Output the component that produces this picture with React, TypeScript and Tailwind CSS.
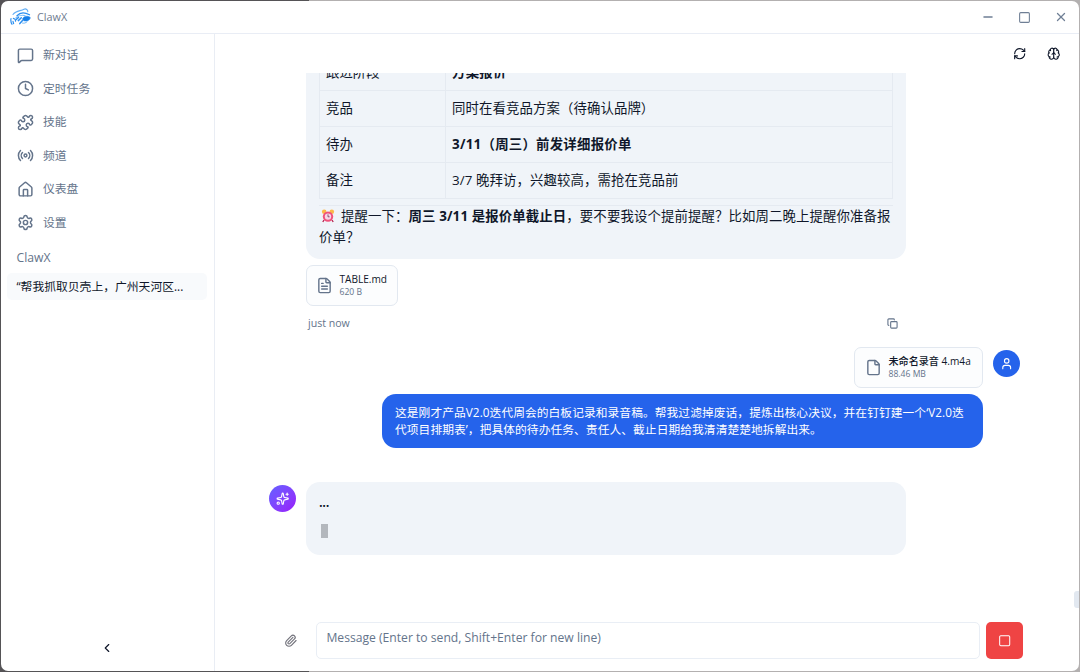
import {
  Brain,
  ChevronLeft,
  Clock,
  Copy,
  File,
  FileText,
  House,
  MessageSquare,
  Minus,
  Paperclip,
  Puzzle,
  Radio,
  RefreshCw,
  Settings,
  Sparkles,
  Square,
  User,
  X,
  type LucideIcon,
} from "lucide-react";

const navItems: { icon: LucideIcon; label: string }[] = [
  { icon: MessageSquare, label: "新对话" },
  { icon: Clock, label: "定时任务" },
  { icon: Puzzle, label: "技能" },
  { icon: Radio, label: "频道" },
  { icon: House, label: "仪表盘" },
  { icon: Settings, label: "设置" },
];

const rows = [
  { name: "跟进阶段", value: "方案报价", bold: true },
  { name: "竞品", value: "同时在看竞品方案（待确认品牌）" },
  { name: "待办", value: "3/11（周三）前发详细报价单", bold: true },
  { name: "备注", value: "3/7 晚拜访，兴趣较高，需抢在竞品前" },
];

function Logo() {
  return (
    <svg viewBox="0 0 22 20" className="h-5 w-[22px]" fill="none" stroke="#2b8ff0" strokeLinecap="round">
      <path d="M3 7.5C6 3.2 11 4.2 14 2.2c2-1 4 .8 3.8 2.6" strokeWidth="1.1" stroke="#62aef5" />
      <path d="M7 8.7c3-3.4 7-4 12.5-.9" strokeWidth="1.3" />
      <path d="M6 10.8c3-2.6 6-3 9-2.2" strokeWidth="1.2" stroke="#7fbef8" />
      <path d="M12.5 12c1-3 5.5-3.8 7.9-1.3-1 2.8-3.6 4-6.7 3z" fill="#147de8" strokeWidth=".6" />
      <path d="M11.3 10.8 8.3 13.6M12.5 13.6l-2.7 3M8.5 10.5l-2.3 2" strokeWidth="1.5" />
      <path d="M1 11.5c-.4 2 .1 4.3 1 5.8M3.3 11.3c1.7.3 2.4 1.3 2.2 2.8M3 14.3l.6 2.4" strokeWidth="1.2" />
      <path d="M17 14.8c-1.5 1.4-3 1.6-4.5 1.3" strokeWidth=".9" stroke="#62aef5" />
    </svg>
  );
}

function AlarmClock() {
  return (
    <svg viewBox="0 0 14 14" className="mr-[6px] inline-block size-[14px] align-[-2px]">
      <path d="m3 11-1.2 2M11 11l1.2 2" stroke="#b4234e" strokeWidth="1.3" />
      <circle cx="3.2" cy="2.8" r="2.3" fill="#fcb84a" />
      <circle cx="10.8" cy="2.8" r="2.3" fill="#fcb84a" />
      <circle cx="7" cy="7.6" r="5.2" fill="#f0527b" />
      <circle cx="7" cy="7.6" r="3.2" fill="#f5d6e6" />
      <path d="M7 5.4v2.4h1.6" stroke="#83436b" strokeWidth=".9" fill="none" />
    </svg>
  );
}

function TitleBar() {
  return (
    <header className="flex h-[33px] shrink-0 items-center border-b border-[#e9edf5] pr-[11px] pl-[9px]">
      <Logo />
      <span className="ml-[5px] text-[10.8px] font-medium text-[#6d7b8f]">ClawX</span>
      <div className="ml-auto flex items-center gap-[23px] text-[#6f7f95]">
        <Minus size={14} strokeWidth={2.2} />
        <Square size={13} strokeWidth={2} />
        <X size={14} strokeWidth={2.2} />
      </div>
    </header>
  );
}

function Sidebar() {
  return (
    <aside className="flex w-[214px] shrink-0 flex-col border-r border-[#e9edf4] pr-[7px] pl-1.5 pt-[4.5px]">
      <nav>
        {navItems.map(({ icon: Icon, label }) => (
          <div key={label} className="flex h-[33.5px] items-center gap-[9.5px] pl-[9.5px] text-[#64748b]">
            <Icon size={17} strokeWidth={2.1} />
            <span className="text-[11.8px]">{label}</span>
          </div>
        ))}
      </nav>
      <div className="mt-[6.5px] pl-[9.5px] text-[12.2px] leading-[24px] text-[#64748b]">ClawX</div>
      <div className="mt-[3px] flex h-[27px] items-center rounded-[5px] bg-[#f8fafc] pl-[9.5px] text-[11.8px] whitespace-nowrap text-[#0f172a]">
        “帮我抓取贝壳上，广州天河区...
      </div>
      <div className="mt-auto flex justify-center pb-4 text-[#0f172a]">
        <ChevronLeft size={14} strokeWidth={2} />
      </div>
    </aside>
  );
}

function Attachment({ icon: Icon, name, size, className }: { icon: LucideIcon; name: string; size: string; className: string }) {
  return (
    <div className={`flex h-[41px] items-center gap-[6.5px] rounded-[7px] border border-[#e2e8f0] bg-[#fcfdfe] whitespace-nowrap ${className}`}>
      <Icon size={17} strokeWidth={2} className="shrink-0 text-[#64748b]" />
      <div>
        <p className="text-[10.1px] leading-[13.4px] font-medium text-[#0f172a]">{name}</p>
        <p className="text-[8.6px] leading-[12.5px] text-[#64748b]">{size}</p>
      </div>
    </div>
  );
}

function ReportMessage() {
  return (
    <div className="ml-[91px] w-[600px]">
      <div className="flex h-[186px] flex-col justify-end overflow-hidden rounded-b-[14px] bg-[#f0f4f9] px-[13px] pb-2.5 text-[13.4px] text-[#0f172a]">
        <table className="w-[574px] shrink-0 table-fixed border-collapse">
          <tbody>
            {rows.map((row) => (
              <tr key={row.name} className="h-[35.8px]">
                <td className="w-[126px] border border-[#e5eaf1] px-1.5 pt-0 pb-[1.5px]">{row.name}</td>
                <td className={`border border-[#e5eaf1] px-1.5 pt-0 pb-[1.5px] ${row.bold ? "font-bold tracking-[0.25px]" : "tracking-[0.1px]"}`}>
                  {row.value}
                </td>
              </tr>
            ))}
          </tbody>
        </table>
        <hr className="mt-[6px] shrink-0 border-[#e5eaf1]" />
        <p className="shrink-0 pl-0.5 leading-[21.6px] tracking-[0.12px] whitespace-nowrap">
          <AlarmClock />
          提醒一下：<strong>周三 3/11 是报价单截止日</strong>，要不要我设个提前提醒？比如周二晚上提醒你准备报
          <br />
          <span className="-ml-0.5">价单？</span>
        </p>
      </div>
      <Attachment icon={FileText} name="TABLE.md" size="620 B" className="mt-[6px] w-[92px] pl-[9px]" />
      <div className="mt-2.5 flex h-4 items-center justify-between pr-2 pl-0.5 text-[#64748b]">
        <span className="text-[10.6px]">just now</span>
        <Copy size={11} strokeWidth={2.4} className="-mt-px" />
      </div>
    </div>
  );
}

function UserMessage() {
  return (
    <div className="mt-[15px] mr-[59px] flex items-start justify-end gap-2.5">
      <div className="flex flex-col items-end gap-[6px]">
        <Attachment icon={File} name="未命名录音 4.m4a" size="88.46 MB" className="w-[129px] pl-2.5" />
        <div className="h-[54px] w-[601px] rounded-[14px] bg-[#2563eb] pt-[10px] pl-[13px] text-[11.72px] leading-[17px] tracking-[0.08px] whitespace-nowrap text-white">
          这是刚才产品V2.0迭代周会的白板记录和录音稿。帮我过滤掉废话，提炼出核心决议，并在钉钉建一个‘V2.0迭
          <br />
          代项目排期表’，把具体的待办任务、责任人、截止日期给我清清楚楚地拆解出来。
        </div>
      </div>
      <div className="mt-[3px] flex size-[27px] items-center justify-center rounded-full bg-[#2563eb] text-white">
        <User size={13.4} strokeWidth={2} />
      </div>
    </div>
  );
}

function PendingMessage() {
  return (
    <div className="mt-[34px] ml-[54px] flex items-start gap-2.5">
      <div className="mt-[3px] flex size-[27px] items-center justify-center rounded-full bg-linear-to-br from-indigo-500 to-purple-600 text-white">
        <Sparkles size={13.4} strokeWidth={2} />
      </div>
      <div className="h-[73px] w-[600px] rounded-[14px] bg-[#f0f4f9] px-[13px] pt-[9px] text-[13.4px] text-[#0f172a]">
        <p className="leading-[22px] font-semibold tracking-[-0.3px]">...</p>
        <div className="mt-[11px] ml-[1.5px] h-[14px] w-[7px] bg-[#b3b7bd]" />
      </div>
    </div>
  );
}

function Composer() {
  return (
    <footer className="mt-auto mb-[12px] ml-[69px] flex h-[37px] items-center">
      <Paperclip size={13.4} strokeWidth={2} className="text-[#71717a]" />
      <div className="ml-[19px] h-[37px] w-[664px] rounded-[5px] border border-[#e9eef5] pt-[5px] pl-[9px] text-[12.15px] leading-[20px] text-[#64748b]">
        Message (Enter to send, Shift+Enter for new line)
      </div>
      <button className="ml-1.5 flex size-[37px] items-center justify-center rounded-[5px] bg-[#ef4444] text-white">
        <Square size={13.4} strokeWidth={1.8} />
      </button>
    </footer>
  );
}

export default function App() {
  return (
    <div
      lang="zh-CN"
      className="h-[672px] w-[1080px] overflow-hidden bg-linear-to-r from-[#555356] from-[309px] to-[#b3b0b0] to-[309px] p-px font-['Open_Sans','Noto_Sans_CJK_SC',sans-serif]"
    >
      <div className="flex h-full flex-col overflow-hidden rounded-[7px] bg-white">
        <TitleBar />
        <div className="flex min-h-0 flex-1">
          <Sidebar />
          <main className="relative flex min-w-0 flex-1 flex-col">
            <div className="flex h-[39px] shrink-0 items-center justify-end gap-5 pr-[19px] text-[#0f172a]">
              <RefreshCw size={13.4} strokeWidth={2} />
              <Brain size={13.4} strokeWidth={2} />
            </div>
            <ReportMessage />
            <UserMessage />
            <PendingMessage />
            <Composer />
            <div className="absolute top-[557px] right-0 h-[17px] w-[5px] rounded-l-[3px] bg-[#e2e8f0]" />
          </main>
        </div>
      </div>
    </div>
  );
}
